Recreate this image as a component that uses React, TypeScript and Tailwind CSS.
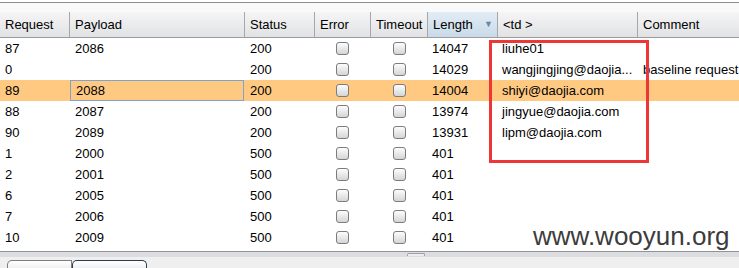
import React from 'react';

interface ResultRow {
  request: string;
  payload: string;
  status: string;
  length: string;
  td: string;
  comment: string;
}

const rows: ResultRow[] = [
  { request: '87', payload: '2086', status: '200', length: '14047', td: 'liuhe01', comment: '' },
  { request: '0', payload: '', status: '200', length: '14029', td: 'wangjingjing@daojia...', comment: 'baseline request' },
  { request: '89', payload: '2088', status: '200', length: '14004', td: 'shiyi@daojia.com', comment: '' },
  { request: '88', payload: '2087', status: '200', length: '13974', td: 'jingyue@daojia.com', comment: '' },
  { request: '90', payload: '2089', status: '200', length: '13931', td: 'lipm@daojia.com', comment: '' },
  { request: '1', payload: '2000', status: '500', length: '401', td: '', comment: '' },
  { request: '2', payload: '2001', status: '500', length: '401', td: '', comment: '' },
  { request: '6', payload: '2005', status: '500', length: '401', td: '', comment: '' },
  { request: '7', payload: '2006', status: '500', length: '401', td: '', comment: '' },
  { request: '10', payload: '2009', status: '500', length: '401', td: '', comment: '' },
];

const cols = 'grid grid-cols-[69px_175px_70px_56px_57px_70px_140px_102px]';

function Checkbox() {
  return (
    <div className="w-[13px] h-[13px] rounded-[3px] border border-[#7c7c7c] bg-linear-to-b from-[#fdfdfd] to-[#d4d5d8]" />
  );
}

function HeaderCell({ label, first, sorted }: { label: string; first?: boolean; sorted?: boolean }) {
  return (
    <div
      className={`flex items-center h-[25px] pl-[5px] whitespace-nowrap overflow-hidden ${
        first ? '' : 'border-l border-[#a7a7a9]'
      } ${sorted ? 'bg-linear-to-b from-[#e2ecf5] to-[#c9dae9]' : ''}`}
    >
      <span className="flex-1">{label}</span>
      {sorted && <span className="text-[9px] text-[#6887aa] pr-[4px]">▼</span>}
    </div>
  );
}

export default function App() {
  return (
    <div
      className="relative w-[739px] h-[268px] overflow-hidden bg-white text-[13px] text-black"
      style={{ fontFamily: '"Liberation Sans", Arial, sans-serif' }}
    >
      {/* top strip */}
      <div className="h-[2px] bg-white" />
      <div className="h-[1px] bg-[#8e8e8e]" />
      <div className="h-[9px] bg-[#f9f9f9]" />

      {/* header */}
      <div className={`${cols} bg-linear-to-b from-[#f5f5f6] to-[#e1e2e4] border-b border-[#9c9c9e]`}>
        <HeaderCell label="Request" first />
        <HeaderCell label="Payload" />
        <HeaderCell label="Status" />
        <HeaderCell label="Error" />
        <HeaderCell label="Timeout" />
        <HeaderCell label="Length" sorted />
        <HeaderCell label="<td >" />
        <HeaderCell label="Comment" />
      </div>

      {/* body */}
      <div className="h-[213px]">
        {rows.map((r) => {
          const hl = r.request === '89';
          return (
            <div key={r.request} className={`${cols} h-[21px] items-center ${hl ? 'bg-[#ffc982]' : ''}`}>
              <div className="pl-[5px]">{r.request}</div>
              <div className={`h-[21px] flex items-center ${hl ? 'ml-[1px] pl-[5px] border border-[#7ea3cf]' : 'pl-[6px]'}`}>
                {r.payload}
              </div>
              <div className="pl-[6px]">{r.status}</div>
              <div className="flex justify-center pl-[1px]">
                <Checkbox />
              </div>
              <div className="flex justify-center pl-[2px]">
                <Checkbox />
              </div>
              <div className="pl-[5px]">{r.length}</div>
              <div className="pl-[5px] whitespace-nowrap overflow-hidden">{r.td}</div>
              <div className="pl-[6px] whitespace-nowrap overflow-hidden">{r.comment}</div>
            </div>
          );
        })}
      </div>

      {/* footer */}
      <div className="border-t border-[#939395]">
        <div className="relative h-[5px] bg-[#dcdde0]">
          <div className="absolute left-[407px] top-[1px] w-[18px] h-[3px] rounded-t-[2px] border border-b-0 border-[#9fa0a3] bg-[#eceded]" />
        </div>
        <div className="h-[11px] bg-[#efefef] flex items-end pl-[7px]">
          <div className="w-[65px] h-[8px] rounded-tl-[5px] border border-b-0 border-[#7d7d7d] bg-linear-to-b from-white to-[#f1f1f1]" />
          <div className="w-[75px] h-[8px] rounded-t-[5px] border border-b-0 border-[#2c3a4c] bg-linear-to-b from-white to-[#eef1f4]" />
        </div>
      </div>

      {/* annotation box */}
      <div className="absolute left-[489px] top-[40px] w-[160px] h-[123px] border-[3px] border-[#ee3636]" />

      {/* watermark */}
      <div className="absolute left-[533px] top-[223px] text-[26px] leading-none text-[#3c3c3c]">www.wooyun.org</div>
    </div>
  );
}
